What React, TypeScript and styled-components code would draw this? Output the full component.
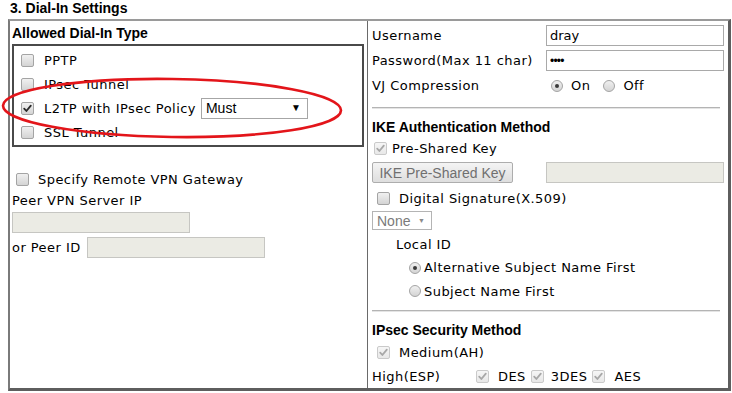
import React from "react";
import styled, { createGlobalStyle } from "styled-components";

const GlobalStyle = createGlobalStyle`
  html, body { margin: 0; padding: 0; background: #ffffff; }
  body {
    font-family: "DejaVu Sans", Verdana, sans-serif;
    font-size: 13px;
    letter-spacing: 0.45px;
    color: #000;
  }
`;

const Page = styled.div`
  position: relative;
  width: 732px;
  height: 393px;
  padding-left: 8px;
  box-sizing: border-box;
  overflow: hidden;
`;

const Title = styled.div`
  font-family: "Liberation Sans", Arial, sans-serif;
  font-weight: bold;
  font-size: 14px;
  letter-spacing: 0;
  height: 19px;
  line-height: 17px;
  padding-left: 2px;
`;

const Frame = styled.div`
  width: 723px;
  box-sizing: border-box;
  border-style: solid;
  border-width: 2px 3px 3px 2px;
  border-color: #9a9a9a #5e5e5e #5e5e5e #7a7a7a;
  display: grid;
  grid-template-columns: 358px 1fr;
`;

const LeftCell = styled.div`
  border-right: 1px solid #6a6a6a;
  padding: 0 4px 0 2px;
  display: flex;
  flex-direction: column;
`;

const RightCell = styled.div`
  padding: 2px 4px 0 4px;
  display: flex;
  flex-direction: column;
`;

const Row = styled.div<{ $h: number; $mt?: number; $pl?: number }>`
  display: flex;
  align-items: center;
  height: ${(p) => p.$h}px;
  margin-top: ${(p) => p.$mt ?? 0}px;
  padding-left: ${(p) => p.$pl ?? 0}px;
  white-space: nowrap;
  flex: none;
`;

const Heading = styled(Row)`
  font-family: "Liberation Sans", Arial, sans-serif;
  font-weight: bold;
  font-size: 14px;
  letter-spacing: 0;
`;

const TypeBox = styled.div`
  width: 352px;
  height: 103px;
  box-sizing: border-box;
  border: 2px solid #4a4a4a;
  padding: 2px 0 1px 7px;
  display: flex;
  flex-direction: column;
`;

const Label = styled.span<{ $w: number }>`
  display: inline-block;
  width: ${(p) => p.$w}px;
  flex: none;
`;

const Gap = styled.span<{ $w: number }>`
  display: inline-block;
  width: ${(p) => p.$w}px;
  flex: none;
`;

const TextField = styled.div<{ $w: number; $h?: number; $disabled?: boolean; $ml?: number }>`
  width: ${(p) => p.$w}px;
  height: ${(p) => p.$h ?? 21}px;
  margin-left: ${(p) => p.$ml ?? 0}px;
  box-sizing: border-box;
  border: 1px solid ${(p) => (p.$disabled ? "#c6c6c2" : "#a9a9a9")};
  background: ${(p) => (p.$disabled ? "#ebebe4" : "#ffffff")};
  display: flex;
  align-items: center;
  padding-left: 3px;
  font-size: 13px;
  letter-spacing: 0;
  flex: none;
`;

const Dots = styled.span`
  font-family: "Liberation Sans", Arial, sans-serif;
  font-size: 12px;
  letter-spacing: -0.8px;
  line-height: 1;
`;

const SelectBox = styled.div<{ $w: number; $h: number; $disabled?: boolean; $ml?: number }>`
  width: ${(p) => p.$w}px;
  height: ${(p) => p.$h}px;
  margin-left: ${(p) => p.$ml ?? 0}px;
  box-sizing: border-box;
  border: 1px solid ${(p) => (p.$disabled ? "#b4b4b4" : "#a6a6a6")};
  background: #ffffff;
  display: flex;
  align-items: center;
  justify-content: space-between;
  padding: 0 6px 0 4px;
  font-family: "Liberation Sans", Arial, sans-serif;
  font-size: 14px;
  letter-spacing: 0;
  color: ${(p) => (p.$disabled ? "#7a7a7a" : "#000000")};
  flex: none;
`;

const Arrow = styled.span<{ $disabled?: boolean }>`
  font-size: ${(p) => (p.$disabled ? 7 : 10)}px;
  color: ${(p) => (p.$disabled ? "#8a8a8a" : "#000")};
  line-height: 1;
`;

const Button = styled.div`
  width: 141px;
  height: 21px;
  box-sizing: border-box;
  border: 1px solid #adadad;
  border-radius: 2px;
  background: linear-gradient(#f4f4f4, #dedede);
  font-family: "Liberation Sans", Arial, sans-serif;
  font-size: 14px;
  letter-spacing: 0;
  color: #707070;
  display: flex;
  align-items: center;
  justify-content: center;
  flex: none;
`;

const Rule = styled.div<{ $mt: number; $mb: number }>`
  margin: ${(p) => p.$mt}px 4px ${(p) => p.$mb}px 0;
  height: 0;
  border-top: 1px solid #b4b4b4;
  border-bottom: 1px solid #e4e4e4;
  flex: none;
`;

const BoxWrap = styled.span<{ $disabled?: boolean; $ml: number; $mr: number; $round?: boolean }>`
  display: inline-flex;
  align-items: center;
  justify-content: center;
  width: ${(p) => (p.$round ? 12 : 13)}px;
  height: ${(p) => (p.$round ? 12 : 13)}px;
  box-sizing: border-box;
  margin-left: ${(p) => p.$ml}px;
  margin-right: ${(p) => p.$mr}px;
  border: 1px solid ${(p) => (p.$disabled ? "#cacaca" : "#a4a4a4")};
  border-radius: ${(p) => (p.$round ? "50%" : "2px")};
  background: ${(p) =>
    p.$disabled
      ? "linear-gradient(#f6f6f6, #e8e8e8)"
      : "linear-gradient(#f0f0f0, #d4d4d4)"};
  flex: none;
`;

const Dot = styled.span`
  width: 4px;
  height: 4px;
  border-radius: 50%;
  background: #3a3a3a;
`;

function Check({
  checked,
  disabled,
  ml = 0,
  mr = 9,
}: {
  checked?: boolean;
  disabled?: boolean;
  ml?: number;
  mr?: number;
}) {
  return (
    <BoxWrap $disabled={disabled} $ml={ml} $mr={mr}>
      {checked && (
        <svg width="11" height="11" viewBox="0 0 11 11">
          <path
            d="M2.2 5.6 L4.4 8 L8.8 2.6"
            fill="none"
            stroke={disabled ? "#a8a8a8" : "#2a2a2a"}
            strokeWidth="1.8"
            strokeLinecap="round"
            strokeLinejoin="round"
          />
        </svg>
      )}
    </BoxWrap>
  );
}

function Radio({ checked, ml = 0, mr = 4 }: { checked?: boolean; ml?: number; mr?: number }) {
  return (
    <BoxWrap $round $ml={ml} $mr={mr}>
      {checked && <Dot />}
    </BoxWrap>
  );
}

const Annotation = styled.svg`
  position: absolute;
  left: 0;
  top: 75px;
  pointer-events: none;
`;

export default function App() {
  return (
    <>
      <GlobalStyle />
      <Page>
        <Title>3. Dial-In Settings</Title>
        <Frame>
          <LeftCell>
            <Heading $h={23}>Allowed Dial-In Type</Heading>
            <TypeBox>
              <Row $h={24}>
                <Check mr={10} />
                PPTP
              </Row>
              <Row $h={24}>
                <Check mr={10} />
                IPsec Tunnel
              </Row>
              <Row $h={24}>
                <Check checked mr={10} />
                L2TP with IPsec Policy
                <SelectBox $w={107} $h={21} $ml={5}>
                  Must
                  <Arrow>▼</Arrow>
                </SelectBox>
              </Row>
              <Row $h={24}>
                <Check mr={10} />
                SSL Tunnel
              </Row>
            </TypeBox>
            <Row $h={22} $mt={21}>
              <Check ml={4} mr={9} />
              Specify Remote VPN Gateway
            </Row>
            <Row $h={20}>Peer VPN Server IP</Row>
            <Row $h={25}>
              <TextField $w={178} $disabled />
            </Row>
            <Row $h={25}>
              or Peer ID
              <TextField $w={178} $disabled $ml={6} />
            </Row>
          </LeftCell>

          <RightCell>
            <Row $h={25}>
              <Label $w={174}>Username</Label>
              <TextField $w={178}>dray</TextField>
            </Row>
            <Row $h={25}>
              <Label $w={174}>Password(Max 11 char)</Label>
              <TextField $w={178}>
                <Dots>••••</Dots>
              </TextField>
            </Row>
            <Row $h={25}>
              <Label $w={174}>VJ Compression</Label>
              <Radio checked ml={5} mr={8} />
              On
              <Radio ml={13} mr={8} />
              Off
            </Row>
            <Rule $mt={9} $mb={7} />
            <Heading $h={22}>IKE Authentication Method</Heading>
            <Row $h={20}>
              <Check checked disabled ml={2} mr={5} />
              Pre-Shared Key
            </Row>
            <Row $h={29}>
              <Button>IKE Pre-Shared Key</Button>
              <Gap $w={33} />
              <TextField $w={178} $disabled />
            </Row>
            <Row $h={22}>
              <Check ml={5} mr={9} />
              Digital Signature(X.509)
            </Row>
            <Row $h={23}>
              <SelectBox $w={60} $h={19} $disabled>
                None
                <Arrow $disabled>▼</Arrow>
              </SelectBox>
            </Row>
            <Row $h={24} $pl={24}>
              Local ID
            </Row>
            <Row $h={23}>
              <Radio checked ml={37} mr={3} />
              Alternative Subject Name First
            </Row>
            <Row $h={24}>
              <Radio ml={37} mr={3} />
              Subject Name First
            </Row>
            <Rule $mt={7} $mb={7} />
            <Heading $h={21}>IPsec Security Method</Heading>
            <Row $h={24}>
              <Check checked disabled ml={5} mr={9} />
              Medium(AH)
            </Row>
            <Row $h={24}>
              <Label $w={104}>High(ESP)</Label>
              <Check checked disabled mr={9} />
              DES
              <Check checked disabled ml={5} mr={7} />
              3DES
              <Check checked disabled ml={5} mr={9} />
              AES
            </Row>
          </RightCell>
        </Frame>
        <Annotation width="346" height="68" viewBox="0 0 346 68">
          <ellipse
            cx="172"
            cy="33"
            rx="169"
            ry="29"
            fill="none"
            stroke="#e3151a"
            strokeWidth="2.6"
            transform="rotate(0.8 172 33)"
          />
        </Annotation>
      </Page>
    </>
  );
}
